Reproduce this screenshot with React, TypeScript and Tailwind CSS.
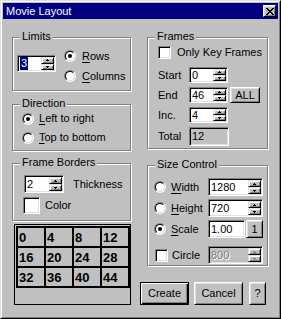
import type { ReactNode } from 'react';

const sunken =
  'border border-t-[#808080] border-l-[#808080] border-r-white border-b-white shadow-[inset_1px_1px_0_#000,inset_-1px_-1px_0_#dfdfdf]';
const raised =
  'border border-t-white border-l-white border-r-black border-b-black bg-[#c0c0c0] shadow-[inset_1px_1px_0_#dfdfdf,inset_-1px_-1px_0_#808080]';
const spinBtn =
  'flex flex-1 items-center justify-center border border-t-[#dfdfdf] border-l-[#dfdfdf] border-r-black border-b-black bg-[#c0c0c0] shadow-[inset_1px_1px_0_#fff,inset_-1px_-1px_0_#808080]';

const Arrow = ({ down = false, color = '#000' }: { down?: boolean; color?: string }) => (
  <svg width="3" height="2" className={`block ${down ? 'rotate-180' : ''}`} shapeRendering="crispEdges">
    <rect x="1" y="0" width="1" height="1" fill={color} />
    <rect x="0" y="1" width="3" height="1" fill={color} />
  </svg>
);

const Spin = ({
  value,
  className,
  selected = false,
  disabled = false,
}: {
  value: string;
  className: string;
  selected?: boolean;
  disabled?: boolean;
}) => (
  <div className={`flex p-[1px] ${sunken} ${disabled ? 'bg-[#c0c0c0]' : 'bg-white'} ${className}`}>
    <span
      className={`flex flex-1 items-center pl-[1px] ${disabled ? 'text-[#808080] [text-shadow:1px_1px_0_#fff]' : ''}`}
    >
      {selected ? <span className="bg-[#000080] px-[1px] text-white">{value}</span> : value}
    </span>
    <div className="flex w-[13px] flex-col">
      <div className={spinBtn}>
        <Arrow color={disabled ? '#808080' : '#000'} />
      </div>
      <div className={spinBtn}>
        <Arrow down color={disabled ? '#808080' : '#000'} />
      </div>
    </div>
  </div>
);

const Field = ({ value, className, gray = false }: { value: string; className: string; gray?: boolean }) => (
  <div className={`flex items-center p-[1px] pl-[2px] ${sunken} ${gray ? 'bg-[#c0c0c0]' : 'bg-white'} ${className}`}>
    {value}
  </div>
);

const Radio = ({ checked = false }: { checked?: boolean }) => (
  <span className="flex h-[12px] w-[12px] shrink-0 items-center justify-center rounded-full border border-t-[#808080] border-l-[#808080] border-r-white border-b-white">
    <span className="flex h-[10px] w-[10px] items-center justify-center rounded-full border border-t-black border-l-black border-r-[#dfdfdf] border-b-[#dfdfdf] bg-white">
      {checked && <span className="h-[4px] w-[4px] rounded-full bg-black" />}
    </span>
  </span>
);

const Check = () => <span className={`block h-[13px] w-[13px] shrink-0 bg-white ${sunken}`} />;

const Group = ({ label, className, children }: { label: string; className: string; children: ReactNode }) => (
  <div
    className={`relative border border-[#808080] shadow-[inset_1px_1px_0_#fff,1px_1px_0_#fff] ${className}`}
  >
    <span className="absolute -top-[8px] left-[7px] bg-[#c0c0c0] px-[2px]">{label}</span>
    {children}
  </div>
);

const U = ({ children }: { children: ReactNode }) => <span className="underline underline-offset-[2px]">{children}</span>;

const cells = [0, 4, 8, 12, 16, 20, 24, 28, 32, 36, 40, 44];

export default function App() {
  return (
    <div className="h-[319px] w-[281px] border border-t-[#dfdfdf] border-l-[#dfdfdf] border-r-black border-b-black bg-[#c0c0c0] font-['Liberation_Sans',Arial,sans-serif] text-[11px] leading-[13px] text-black">
      <div className="h-full border border-t-white border-l-white border-r-[#808080] border-b-[#808080] p-[1px]">
        <div className="flex h-[16px] items-center bg-[#000080] pl-[3px] pr-[2px]">
          <span className="text-white">Movie Layout</span>
          <div className={`ml-auto flex h-[12px] w-[13px] items-center justify-center ${raised}`}>
            <svg width="8" height="7" shapeRendering="crispEdges" className="block">
              <path
                d="M0 0h2v1H0zM6 0h2v1H6zM1 1h2v1H1zM5 1h2v1H5zM2 2h4v1H2zM3 3h2v1H3zM2 4h4v1H2zM1 5h2v1H1zM5 5h2v1H5zM0 6h2v1H0zM6 6h2v1H6z"
                fill="#000"
              />
            </svg>
          </div>
        </div>

        <div className="flex pl-[9px] pt-[18px]">
          {/* left column */}
          <div className="flex w-[128px] flex-col">
            <Group label="Limits" className="h-[54px] w-[119px]">
              <div className="flex items-start pl-[4px]">
                <Spin value="3" selected className="mt-[17px] h-[17px] w-[39px]" />
                <div className="ml-[8px] mt-[8px] flex flex-col">
                  <div className="flex h-[20px] items-center gap-[6px]">
                    <Radio checked />
                    <span>
                      <U>R</U>ows
                    </span>
                  </div>
                  <div className="flex h-[20px] items-center gap-[6px]">
                    <Radio />
                    <span>
                      <U>C</U>olumns
                    </span>
                  </div>
                </div>
              </div>
            </Group>

            <Group label="Direction" className="mt-[13px] h-[47px] w-[119px]">
              <div className="flex flex-col pl-[9px] pt-[4px]">
                <div className="flex h-[19px] items-center gap-[5px]">
                  <Radio checked />
                  <span>
                    <U>L</U>eft to right
                  </span>
                </div>
                <div className="flex h-[19px] items-center gap-[5px]">
                  <Radio />
                  <span>
                    <U>T</U>op to bottom
                  </span>
                </div>
              </div>
            </Group>

            <Group label="Frame Borders" className="mt-[12px] h-[58px] w-[119px]">
              <div className="flex flex-col pl-[10px] pt-[11px]">
                <div className="flex items-center">
                  <Spin value="2" className="ml-[1px] h-[18px] w-[40px]" />
                  <span className="ml-[9px]">Thickness</span>
                </div>
                <div className="mt-[4px] flex items-center">
                  <span className={`block h-[17px] w-[17px] bg-white ${sunken}`} />
                  <span className="ml-[5px]">Color</span>
                </div>
              </div>
            </Group>

            <div className="ml-[2px] mt-[3px] h-[81px] w-[117px] border border-black p-[1px]">
              <div className="grid w-fit grid-cols-[repeat(4,26px)] grid-rows-[repeat(3,18px)] gap-[2px] bg-black p-[2px]">
                {cells.map((n) => (
                  <div key={n} className="flex items-center bg-[#c0c0c0] pl-[1px] text-[13px] font-bold leading-[15px]">
                    {n}
                  </div>
                ))}
              </div>
            </div>
          </div>

          {/* right column */}
          <div className="flex w-[129px] flex-col">
            <Group label="Frames" className="ml-[7px] h-[112px] w-[121px]">
              <div className="flex flex-col pl-[10px] pt-[8px]">
                <div className="flex h-[13px] items-center">
                  <Check />
                  <span className="ml-[6px]">Only Key Frames</span>
                </div>
                <div className="mt-[6px] flex h-[20px] items-center">
                  <span className="w-[31px]">Start</span>
                  <Spin value="0" className="h-[16px] w-[39px]" />
                </div>
                <div className="flex h-[20px] items-center">
                  <span className="w-[31px]">End</span>
                  <Spin value="46" className="h-[16px] w-[39px]" />
                  <button className={`ml-[2px] flex h-[16px] w-[30px] items-center justify-center ${raised}`}>ALL</button>
                </div>
                <div className="flex h-[20px] items-center">
                  <span className="w-[31px]">Inc.</span>
                  <Spin value="4" className="h-[16px] w-[39px]" />
                </div>
                <div className="mt-[2px] flex h-[19px] items-center">
                  <span className="w-[31px]">Total</span>
                  <Field value="12" gray className="h-[19px] w-[40px]" />
                </div>
              </div>
            </Group>

            <Group label="Size Control" className="ml-[7px] mt-[16px] h-[101px] w-[121px]">
              <div className="flex flex-col pl-[6px] pt-[12px]">
                <div className="flex h-[18px] items-center">
                  <div className="flex w-[54px] items-center gap-[5px]">
                    <Radio />
                    <span>
                      <U>W</U>idth
                    </span>
                  </div>
                  <Spin value="1280" className="h-[18px] w-[55px]" />
                </div>
                <div className="mt-[3px] flex h-[18px] items-center">
                  <div className="flex w-[54px] items-center gap-[5px]">
                    <Radio />
                    <span>
                      <U>H</U>eight
                    </span>
                  </div>
                  <Spin value="720" className="h-[18px] w-[55px]" />
                </div>
                <div className="mt-[3px] flex h-[18px] items-center">
                  <div className="flex w-[54px] items-center gap-[5px]">
                    <Radio checked />
                    <span>
                      <U>S</U>cale
                    </span>
                  </div>
                  <Field value="1.00" className="h-[18px] w-[37px]" />
                  <button className={`ml-[1px] flex h-[18px] w-[17px] items-center justify-center ${raised}`}>1</button>
                </div>
                <div className="mt-[8px] flex h-[18px] items-center">
                  <div className="flex w-[54px] items-center gap-[4px] pl-[1px]">
                    <Check />
                    <span>Circle</span>
                  </div>
                  <Spin value="800" disabled className="h-[18px] w-[55px]" />
                </div>
              </div>
            </Group>

            <div className="mt-[16px] flex">
              <button className="flex h-[23px] w-[49px] items-center justify-center border border-black bg-[#c0c0c0] shadow-[inset_1px_1px_0_#fff,inset_-1px_-1px_0_#000,inset_-2px_-2px_0_#808080]">
                Create
              </button>
              <button className={`ml-[5px] flex h-[23px] w-[49px] items-center justify-center ${raised}`}>Cancel</button>
              <button className={`ml-[6px] flex h-[23px] w-[17px] items-center justify-center ${raised}`}>?</button>
            </div>
          </div>
        </div>
      </div>
    </div>
  );
}
